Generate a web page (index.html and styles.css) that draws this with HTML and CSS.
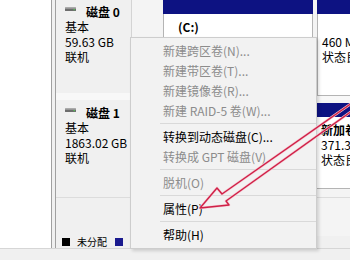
FILE: index.html
```html
<!DOCTYPE html>
<html lang="zh-CN">
<head>
  <meta charset="UTF-8">
  <title>磁盘管理</title>
  <link rel="stylesheet" href="styles.css">
</head>
<body>
<div class="screen">
  <div class="main">
    <div class="tree"></div>
    <div class="disks">
      <div class="disk disk-0">
        <div class="disk-label">
          <div class="disk-name">
            <svg class="disk-icon" width="11" height="5" viewBox="0 0 11 5"><rect x="0" y="0.5" width="11" height="3.5" rx="0.5" fill="#6d6d6d"/><rect x="0" y="0.5" width="11" height="1.2" fill="#a8a8a8"/><rect x="8.5" y="2.2" width="1.5" height="1" fill="#4fd04f"/></svg>
            <b>磁盘 0</b>
          </div>
          <div>基本</div>
          <div>59.63 GB</div>
          <div>联机</div>
        </div>
        <div class="parts">
          <div class="part part-c">
            <div class="part-head"></div>
            <div class="part-body"><b>(C:)</b></div>
          </div>
          <div class="part part-side">
            <div class="part-head"></div>
            <div class="part-body">
              <div>&nbsp;</div>
              <div>460 MB</div>
              <div>状态良好 (恢复分区)</div>
            </div>
          </div>
        </div>
      </div>

      <div class="disk disk-1">
        <div class="disk-label">
          <div class="disk-name">
            <svg class="disk-icon" width="11" height="5" viewBox="0 0 11 5"><rect x="0" y="0.5" width="11" height="3.5" rx="0.5" fill="#6d6d6d"/><rect x="0" y="0.5" width="11" height="1.2" fill="#a8a8a8"/><rect x="8.5" y="2.2" width="1.5" height="1" fill="#4fd04f"/></svg>
            <b>磁盘 1</b>
          </div>
          <div>基本</div>
          <div>1863.02 GB</div>
          <div>联机</div>
        </div>
        <div class="parts">
          <div class="part part-d">
            <div class="part-head"></div>
            <div class="part-body"></div>
          </div>
          <div class="part part-side">
            <div class="part-head"></div>
            <div class="part-body">
              <div><b>新加卷 (E:)</b></div>
              <div>371.31 GB NTFS</div>
              <div>状态良好 (主分区)</div>
            </div>
          </div>
        </div>
      </div>

      <div class="disk-rest">
        <div class="rest-label"></div>
        <div class="rest-parts"></div>
      </div>

      <div class="legend">
        <span class="swatch swatch-free"></span><span>未分配</span>
        <span class="swatch swatch-primary"></span><span>主分区</span>
      </div>
    </div>
  </div>
  <div class="statusbar"></div>

  <div class="menu">
    <div class="item disabled">新建跨区卷(N)...</div>
    <div class="item disabled">新建带区卷(T)...</div>
    <div class="item disabled">新建镜像卷(R)...</div>
    <div class="item disabled">新建 RAID-5 卷(W)...</div>
    <div class="sep"></div>
    <div class="item">转换到动态磁盘(C)...</div>
    <div class="item disabled">转换成 GPT 磁盘(V)</div>
    <div class="sep"></div>
    <div class="item disabled">脱机(O)</div>
    <div class="sep"></div>
    <div class="item">属性(P)</div>
    <div class="sep"></div>
    <div class="item">帮助(H)</div>
  </div>

  <!-- red annotation arrow -->
  <svg class="arrow" width="350" height="260" viewBox="0 0 350 260">
    <polygon points="200,208 217,188 222,194 352,103 352,111 226,201 229,205" fill="none" stroke="#f5c8d1" stroke-width="2.6" stroke-linejoin="round"/>
    <polygon points="200,208 217,188 222,194 352,103 352,111 226,201 229,205" fill="none" stroke="#cf2148" stroke-width="1.4" stroke-linejoin="round"/>
  </svg>
</div>
</body>
</html>
```

FILE: styles.css
```css
/* disk management window */
body {
  margin: 0;
  font-family: "Noto Sans CJK SC", sans-serif;
  font-size: 12px;
  color: #000;
  background: #f0f0f0;
}

.screen {
  position: relative;
  width: 350px;
  height: 260px;
  overflow: hidden;
  display: flex;
  flex-direction: column;
}

.main {
  height: 248px;
  display: flex;
}

.tree {
  width: 51px;
  flex-shrink: 0;
  background: #fff;
  border-right: 1px solid #a0a0a0;
}

.disks {
  flex: 1;
  min-width: 0;
  margin-left: 3px;
  border-left: 1px solid #a0a0a0;
  background: #f8f8f8;
  display: flex;
  flex-direction: column;
  overflow: hidden;
}

.disk {
  display: flex;
  flex-shrink: 0;
}

.disk-0 {
  height: 96px;
  margin-bottom: 4px;
}

.disk-1 {
  height: 97px;
  border-bottom: 1px solid #dcdcdc;
}

.disk-label {
  width: 66px;
  flex-shrink: 0;
  padding-left: 9px;
  background: #f0f0f0;
  border-right: 1px solid #d4d4d4;
  line-height: 15px;
  white-space: nowrap;
}

.disk-0 .disk-label {
  padding-top: 4px;
  height: 89px;
}

.disk-1 .disk-label {
  padding-top: 5px;
}

.disk-name {
  display: flex;
  align-items: center;
}

.disk-icon {
  margin: -4px 10px 0 0;
}

.parts {
  flex: 1;
  min-width: 0;
  overflow: hidden;
  display: flex;
  gap: 4px;
  padding-left: 31px;
  background: #f4f4f4;
}

.disk-1 .parts {
  padding-top: 3px;
  padding-bottom: 8px;
}

.part {
  display: flex;
  flex-direction: column;
  flex-shrink: 0;
}

.part-c {
  width: 150px;
}

.part-d {
  width: 149px;
}

.part-side {
  width: 80px;
}

.part-head {
  height: 14px;
  background: #0d1282;
}

.part-body {
  flex: 1;
  background: #fff;
  border: 1px solid #b4b4b4;
  border-top: none;
  padding: 5px 0 0 4px;
  line-height: 15px;
  white-space: nowrap;
}

.part-c .part-body {
  padding-left: 14px;
}

.disk-rest {
  flex: 1;
  display: flex;
}

.rest-label {
  width: 75px;
  flex-shrink: 0;
  background: #f0f0f0;
  border-right: 1px solid #d4d4d4;
}

.rest-parts {
  flex: 1;
  background: #f4f4f4;
}

.legend {
  height: 12px;
  flex-shrink: 0;
  display: flex;
  align-items: center;
  padding-left: 6px;
  font-size: 10px;
  line-height: 12px;
  white-space: nowrap;
  background: #f0f0f0;
}

.swatch {
  width: 8px;
  height: 8px;
  flex-shrink: 0;
  margin-right: 7px;
}

.swatch-free {
  background: #000;
}

.swatch-primary {
  background: #1a1a8e;
  margin-left: 8px;
}

.statusbar {
  height: 11px;
  border-top: 1px solid #d6d6d6;
  background: #f0f0f0;
}

.menu {
  position: absolute;
  left: 130px;
  top: 37px;
  width: 185px;
  padding: 3px 0;
  background: #f2f2f2;
  border: 1px solid #cdcdcd;
  box-shadow: 2px 2px 3px rgba(0, 0, 0, 0.15);
}

.item {
  height: 20px;
  line-height: 20px;
  padding-left: 32px;
  white-space: nowrap;
}

.item.disabled {
  color: #8c8c8c;
}

.sep {
  height: 1px;
  margin: 2px 0 3px 29px;
  background: #d9d9d9;
}

.arrow {
  position: absolute;
  left: 0;
  top: 0;
  pointer-events: none;
}
```
